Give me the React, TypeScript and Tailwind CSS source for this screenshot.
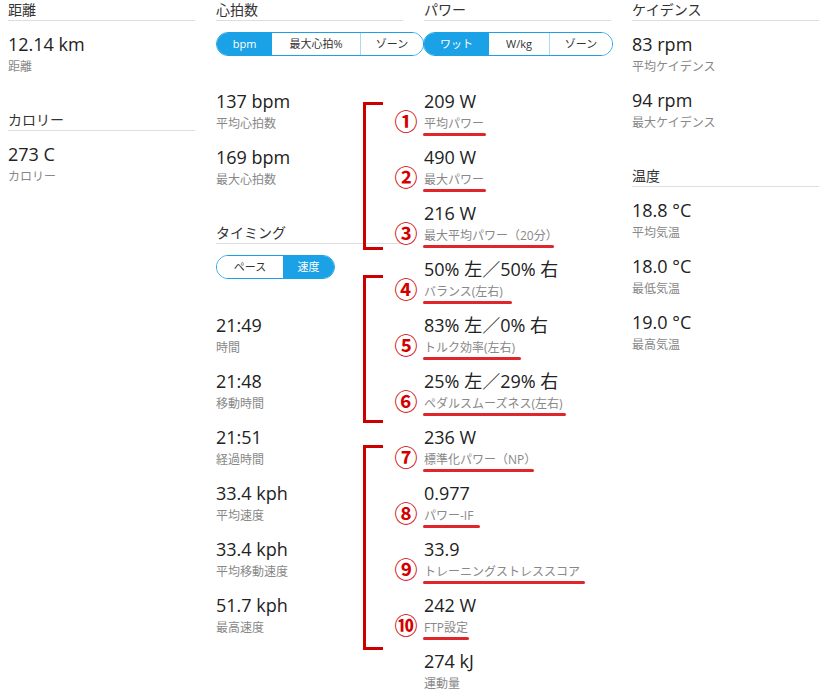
import type { ReactNode } from 'react';
import clsx from 'clsx';

function SectionHeader({ title, className }: { title: string; className?: string }) {
  return (
    <div className={clsx('h-[21px] border-b border-[#dddddd] text-[14px] leading-[20px] text-[#333]', className)}>
      {title}
    </div>
  );
}

interface StatProps {
  value: string;
  label: string;
  mark?: string;
  line?: string;
}

function Stat({ value, label, mark, line }: StatProps) {
  return (
    <div className="relative h-14">
      <div className="text-[18px] leading-6 text-[#222]">{value}</div>
      <div className="mt-[3px] text-[12px] leading-4 text-[#888]">
        <span className="relative inline-block">
          {label}
          {line && <span className={clsx('absolute -left-px top-full mt-px h-[3px] rounded-full bg-[#e1262b]', line)} />}
        </span>
      </div>
      {mark && (
        <span className="absolute -left-[30px] top-[21px] w-[24px] text-center text-[23px] font-bold leading-[22px] text-[#d40000]">
          {mark}
        </span>
      )}
    </div>
  );
}

interface Seg {
  label: string;
  w: string;
}

function Segmented({ items, active, className }: { items: Seg[]; active: number; className?: string }) {
  return (
    <div className={clsx('flex h-6 overflow-hidden rounded-full border border-[#1ba1e6] text-[11px]', className)}>
      {items.map((it, i) => (
        <div
          key={it.label}
          className={clsx(
            'flex items-center justify-center',
            it.w,
            i === active ? 'bg-[#1ba1e6] text-white' : 'bg-white text-[#333]',
            i > 0 && i !== active && i - 1 !== active && 'border-l border-[#a9dbf5]'
          )}
        >
          {it.label}
        </div>
      ))}
    </div>
  );
}

function Bracket({ className }: { className: string }) {
  return (
    <div
      className={clsx(
        'absolute -left-[61px] w-[20px] border-y-[3px] border-l-[3px] border-[#cc0000]',
        className
      )}
    />
  );
}

function Group({ children, bracket }: { children: ReactNode; bracket: string }) {
  return (
    <div className="relative">
      <Bracket className={bracket} />
      {children}
    </div>
  );
}

export default function App() {
  return (
    <div className="min-h-[697px] bg-white px-2 font-['Open_Sans','Noto_Sans_CJK_JP',sans-serif]">
      <div className="grid grid-cols-[187px_187px_187px_187px] gap-x-[21px]">
        {/* 距離 / カロリー */}
        <div>
          <SectionHeader title="距離" />
          <div className="mt-[11px]">
            <Stat value="12.14 km" label="距離" />
          </div>
          <SectionHeader title="カロリー" className="mt-[22px]" />
          <div className="mt-[11px]">
            <Stat value="273 C" label="カロリー" />
          </div>
        </div>

        {/* 心拍数 / タイミング */}
        <div>
          <SectionHeader title="心拍数" />
          <Segmented
            className="relative z-10 mt-[11px] w-[208px]"
            active={0}
            items={[
              { label: 'bpm', w: 'w-[55px]' },
              { label: '最大心拍%', w: 'w-[88px]' },
              { label: 'ゾーン', w: 'flex-1' },
            ]}
          />
          <div className="mt-[33px]">
            <Stat value="137 bpm" label="平均心拍数" />
            <Stat value="169 bpm" label="最大心拍数" />
          </div>
          <SectionHeader title="タイミング" className="mt-[22px]" />
          <Segmented
            className="mt-[11px] w-[119px]"
            active={1}
            items={[
              { label: 'ペース', w: 'w-[66px]' },
              { label: '速度', w: 'flex-1' },
            ]}
          />
          <div className="mt-[34px]">
            <Stat value="21:49" label="時間" />
            <Stat value="21:48" label="移動時間" />
            <Stat value="21:51" label="経過時間" />
            <Stat value="33.4 kph" label="平均速度" />
            <Stat value="33.4 kph" label="平均移動速度" />
            <Stat value="51.7 kph" label="最高速度" />
          </div>
        </div>

        {/* パワー */}
        <div className="relative z-20">
          <SectionHeader title="パワー" />
          <Segmented
            className="mt-[11px] -ml-px w-[190px]"
            active={0}
            items={[
              { label: 'ワット', w: 'w-[65px]' },
              { label: 'W/kg', w: 'w-[60px]' },
              { label: 'ゾーン', w: 'flex-1' },
            ]}
          />
          <div className="mt-[33px]">
            <Group bracket="top-[13px] bottom-[7px]">
              <Stat value="209 W" label="平均パワー" mark="①" line="w-[63px]" />
              <Stat value="490 W" label="最大パワー" mark="②" line="w-[63px]" />
              <Stat value="216 W" label="最大平均パワー（20分）" mark="③" line="w-[131px]" />
            </Group>
            <Group bracket="top-[18px] bottom-[2px]">
              <Stat value="50% 左／50% 右" label="バランス(左右)" mark="④" line="w-[89px]" />
              <Stat value="83% 左／0% 右" label="トルク効率(左右)" mark="⑤" line="w-[98px]" />
              <Stat value="25% 左／29% 右" label="ペダルスムーズネス(左右)" mark="⑥" line="w-[143px]" />
            </Group>
            <Group bracket="top-[20px] -bottom-px">
              <Stat value="236 W" label="標準化パワー（NP）" mark="⑦" line="w-[111px]" />
              <Stat value="0.977" label="パワー-IF" mark="⑧" line="w-[57px]" />
              <Stat value="33.9" label="トレーニングストレススコア" mark="⑨" line="w-[162px]" />
              <Stat value="242 W" label="FTP設定" mark="⑩" line="w-[46px]" />
            </Group>
            <Stat value="274 kJ" label="運動量" />
          </div>
        </div>

        {/* ケイデンス / 温度 */}
        <div>
          <SectionHeader title="ケイデンス" />
          <div className="mt-[11px]">
            <Stat value="83 rpm" label="平均ケイデンス" />
            <Stat value="94 rpm" label="最大ケイデンス" />
          </div>
          <SectionHeader title="温度" className="mt-[22px]" />
          <div className="mt-[11px]">
            <Stat value="18.8 °C" label="平均気温" />
            <Stat value="18.0 °C" label="最低気温" />
            <Stat value="19.0 °C" label="最高気温" />
          </div>
        </div>
      </div>
    </div>
  );
}
